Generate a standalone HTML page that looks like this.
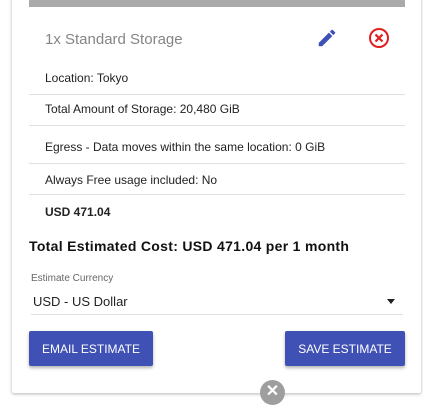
<!DOCTYPE html><html><head><style>
body{margin:0;width:423px;height:400px;background:#fff;font-family:"Liberation Sans",sans-serif;position:relative;overflow:hidden}
.card{position:absolute;left:12px;top:-10px;width:409px;height:403px;background:#fff;box-shadow:0 1px 3px rgba(0,0,0,.3);border-radius:2px}
.bar{position:absolute;left:29px;top:0;width:376px;height:7px;background:#aaa}
.t{position:absolute;left:45px;font-size:12px;color:#222}
.hr{position:absolute;left:29px;width:376px;height:1px;background:#e0e0e0}
.btn{position:absolute;top:331px;height:35px;background:#3f51b5;color:#fff;font-size:12px;border-radius:2px;box-shadow:0 2px 3px rgba(0,0,0,.3);display:flex;align-items:center;justify-content:center}
</style></head><body>
<div class="card"></div>
<div class="bar"></div>
<div style="position:absolute;left:45px;top:31px;font-size:15px;color:#858585">1x Standard Storage</div>
<svg style="position:absolute;left:316px;top:27px" width="22" height="22" viewBox="0 0 24 24"><path fill="#3f51b5" d="M3 17.25V21h3.75L17.81 9.94l-3.75-3.75L3 17.25zM20.71 7.04a1 1 0 000-1.41l-2.34-2.34a1 1 0 00-1.41 0l-1.83 1.83 3.75 3.75 1.83-1.83z"/></svg>
<svg style="position:absolute;left:367px;top:26px" width="24" height="24" viewBox="0 0 24 24"><circle cx="12" cy="12" r="9" fill="none" stroke="#e02020" stroke-width="2"/><path d="M8.5 8.5l7 7M15.5 8.5l-7 7" stroke="#e02020" stroke-width="2.2"/></svg>
<div class="t" style="top:71px">Location: Tokyo</div>
<div class="hr" style="top:94px"></div>
<div class="t" style="top:102px">Total Amount of Storage: 20,480 GiB</div>
<div class="hr" style="top:125px"></div>
<div class="t" style="top:140px">Egress - Data moves within the same location: 0 GiB</div>
<div class="hr" style="top:163px"></div>
<div class="t" style="top:173px">Always Free usage included: No</div>
<div class="hr" style="top:194px"></div>
<div class="t" style="top:205px;font-weight:bold">USD 471.04</div>
<div style="position:absolute;left:29px;top:238px;font-size:14px;font-weight:bold;color:#111;letter-spacing:0.3px">Total Estimated Cost: USD 471.04 per 1 month</div>
<div style="position:absolute;left:31px;top:273px;font-size:10px;color:#666">Estimate Currency</div>
<div style="position:absolute;left:33px;top:294px;font-size:13px;color:#222">USD - US Dollar</div>
<div style="position:absolute;left:387px;top:299px;width:0;height:0;border-left:4px solid transparent;border-right:4px solid transparent;border-top:5px solid #222"></div>
<div class="hr" style="left:31px;width:372px;top:314px"></div>
<div class="btn" style="left:29px;width:124px">EMAIL ESTIMATE</div>
<div class="btn" style="left:285px;width:120px">SAVE ESTIMATE</div>
<div style="position:absolute;left:260px;top:380px;width:25px;height:25px;border-radius:50%;background:#9e9e9e;color:#fff;font-size:16px;font-weight:bold;text-align:center;line-height:24px">✕</div>
</body></html>
